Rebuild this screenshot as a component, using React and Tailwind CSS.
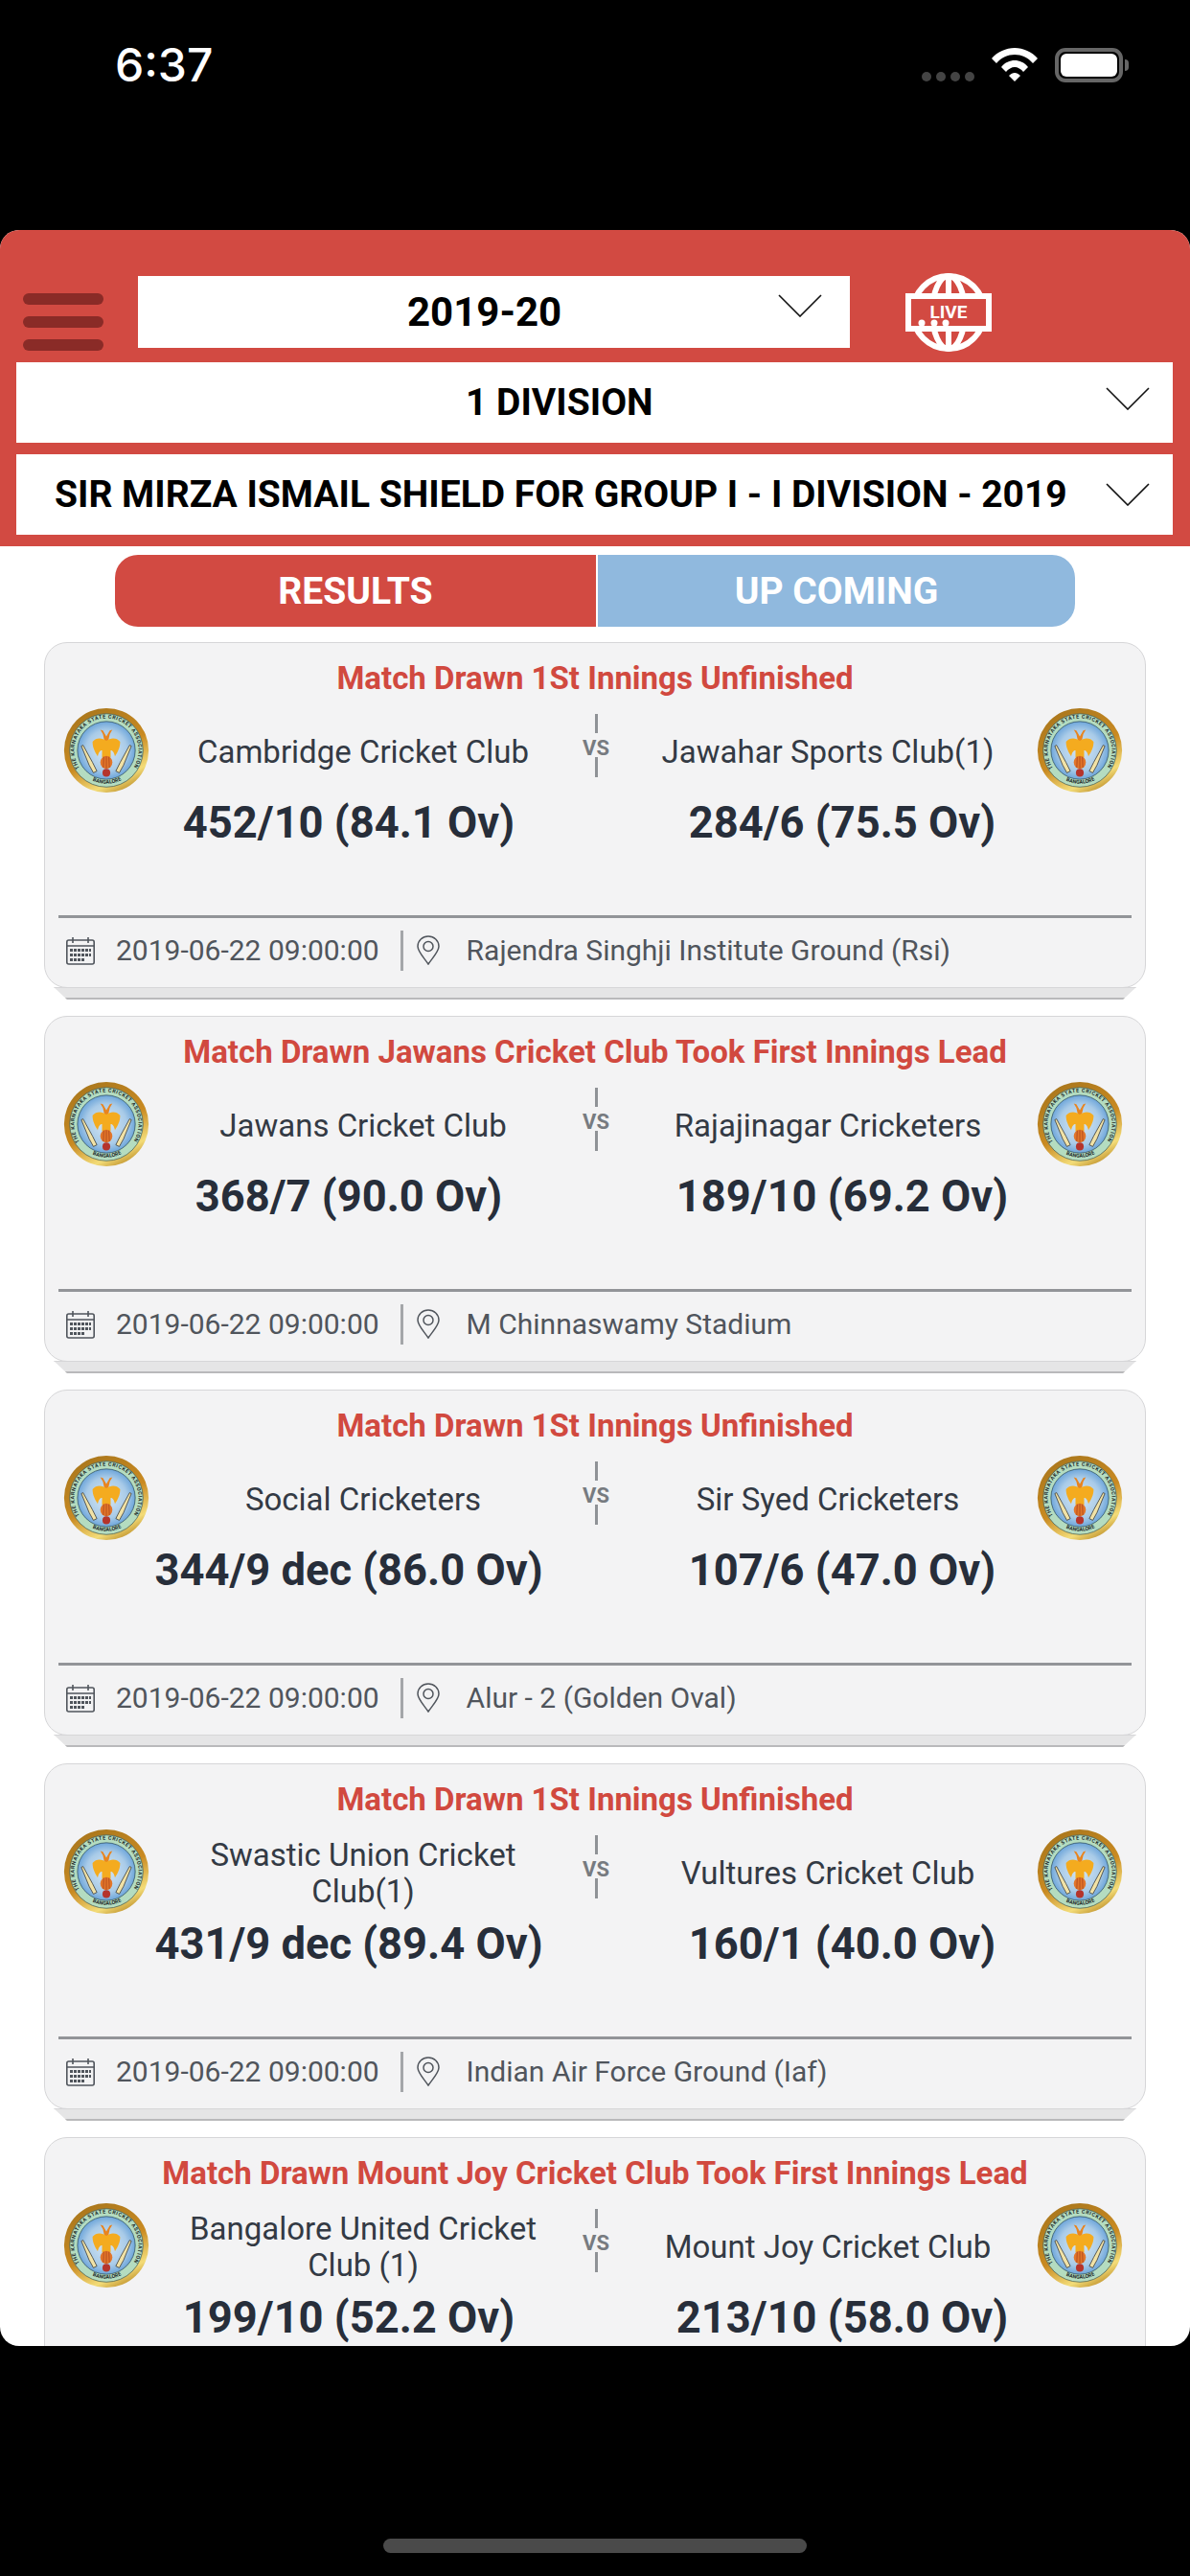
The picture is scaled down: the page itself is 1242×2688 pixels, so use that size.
import React from 'react';

const matches = [
  { status: 'Match Drawn 1St Innings Unfinished', a: 'Cambridge Cricket Club', b: 'Jawahar Sports Club(1)', sa: '452/10 (84.1 Ov)', sb: '284/6 (75.5 Ov)', venue: 'Rajendra Singhji Institute Ground (Rsi)' },
  { status: 'Match Drawn Jawans Cricket Club Took First Innings Lead', a: 'Jawans Cricket Club', b: 'Rajajinagar Cricketers', sa: '368/7 (90.0 Ov)', sb: '189/10 (69.2 Ov)', venue: 'M Chinnaswamy Stadium' },
  { status: 'Match Drawn 1St Innings Unfinished', a: 'Social Cricketers', b: 'Sir Syed Cricketers', sa: '344/9 dec (86.0 Ov)', sb: '107/6 (47.0 Ov)', venue: 'Alur - 2 (Golden Oval)' },
  { status: 'Match Drawn 1St Innings Unfinished', a: 'Swastic Union Cricket Club(1)', b: 'Vultures Cricket Club', sa: '431/9 dec (89.4 Ov)', sb: '160/1 (40.0 Ov)', venue: 'Indian Air Force Ground (Iaf)' },
  { status: 'Match Drawn Mount Joy Cricket Club Took First Innings Lead', a: 'Bangalore United Cricket Club (1)', b: 'Mount Joy Cricket Club', sa: '199/10 (52.2 Ov)', sb: '213/10 (58.0 Ov)' },
];

const Chevron = () => (
  <svg width="46" height="24" viewBox="0 0 46 24" fill="none" stroke="#111" strokeWidth="1.6">
    <path d="M1 1 L23 23 L45 1" />
  </svg>
);

const Logo = ({ id }) => (
  <svg width="90" height="90" viewBox="0 0 100 100" className="shrink-0 -mt-[4px]">
    <defs>
      <linearGradient id={`gold-${id}`} x1="0.2" y1="0" x2="0.7" y2="1">
        <stop offset="0" stopColor="#a8761c" />
        <stop offset="0.55" stopColor="#c98a22" />
        <stop offset="0.85" stopColor="#f3dc78" />
        <stop offset="1" stopColor="#c0922c" />
      </linearGradient>
      <radialGradient id={`sky-${id}`}>
        <stop offset="0" stopColor="#d6e6f3" />
        <stop offset="0.7" stopColor="#a9cbe8" />
        <stop offset="1" stopColor="#6ea6da" />
      </radialGradient>
      <path id={`top-${id}`} d="M20 72 A37.2 37.2 0 1 1 80 72" />
      <path id={`bot-${id}`} d="M27 81 A38.6 38.6 0 0 0 73 81" />
    </defs>
    <circle cx="50" cy="50" r="49" fill={`url(#gold-${id})`} />
    <circle cx="50" cy="50" r="42.5" fill="#b4dcc0" stroke="#3f5a55" strokeWidth="0.8" />
    <circle cx="50" cy="50" r="33.5" fill={`url(#sky-${id})`} stroke="#2b4a5a" strokeWidth="0.8" />
    <text fontSize="6" fontWeight="700" fill="#1d2b2b" fontFamily="Roboto, sans-serif">
      <textPath href={`#top-${id}`} startOffset="2" textLength="158">THE KARNATAKA STATE CRICKET ASSOCIATION</textPath>
    </text>
    <text fontSize="6" fontWeight="700" fill="#1d2b2b" fontFamily="Roboto, sans-serif">
      <textPath href={`#bot-${id}`} startOffset="8">BANGALORE</textPath>
    </text>
    <path d="M43 26 L46 31 L48 40 H52 L54 31 L57 26 L54 27 L50 34 L46 27 Z" fill="#e8841f" />
    <path d="M50 39 C45 35 38 35 34 40 C34 47 37 52 40 57 C41 52 43 50 45 50 L45 58 H55 L55 50 C57 50 59 52 60 57 C63 52 66 47 66 40 C62 35 55 35 50 39 Z" fill="#f4ab1f" />
    <ellipse cx="50" cy="64" rx="7" ry="7.5" fill="#e2762a" />
    <path d="M50 57 V71 M47 57.5 L46.5 70 M53 57.5 L53.5 70" stroke="#a63d1a" strokeWidth="0.8" />
    <path d="M21 45 L23 44 L34 64 L39 74 L35 76 L30 67 Z" fill="#f1e2a6" stroke="#2a2a2a" strokeWidth="0.8" />
    <path d="M79 45 L77 44 L66 64 L61 74 L65 76 L70 67 Z" fill="#f1e2a6" stroke="#2a2a2a" strokeWidth="0.8" />
    <circle cx="50" cy="76" r="4.5" fill="#b5342c" />
  </svg>
);

const LiveIcon = () => (
  <svg width="90" height="82" viewBox="0 0 90 82" className="shrink-0">
    <g fill="none" stroke="#fff" strokeWidth="6">
      <ellipse cx="45" cy="41" rx="37.5" ry="38" />
      <ellipse cx="45" cy="41" rx="17" ry="38" />
      <path d="M45 2 V80" />
    </g>
    <rect x="3" y="24" width="84" height="34" fill="#d24a42" stroke="#fff" strokeWidth="6" />
    <text x="45" y="47" textAnchor="middle" fontSize="19" fontWeight="700" fill="#fff" fontFamily="Roboto, sans-serif">LIVE</text>
    <circle cx="17" cy="52" r="3.5" fill="#fff" /><circle cx="30" cy="52" r="3.5" fill="#fff" /><circle cx="42" cy="52" r="3.5" fill="#fff" />
  </svg>
);

const CalendarIcon = () => (
  <svg width="30" height="30" viewBox="0 0 30 30" fill="none" className="shrink-0">
    <rect x="0.8" y="4" width="28.4" height="25" rx="2" stroke="#50555c" strokeWidth="1.6" fill="#f3f3f4" />
    <path d="M1 10 H29 M7 1 V7 M23 1 V7" stroke="#50555c" strokeWidth="1.6" />
    <g fill="#50555c">
      <rect x="4" y="13" width="22" height="3" /><rect x="4" y="18" width="22" height="3" /><rect x="4" y="23" width="15" height="3" />
    </g>
    <path d="M7.5 12 V27 M11.5 12 V27 M15.5 12 V27 M19.5 12 V27 M23.5 12 V27" stroke="#f3f3f4" strokeWidth="1" />
  </svg>
);

const PinIcon = () => (
  <svg width="24" height="31" viewBox="0 0 24 31" fill="none" stroke="#50555c" strokeWidth="1.5" className="shrink-0">
    <path d="M12 30 C8 24 1 17 1 11.5 C1 5.5 6 1 12 1 C18 1 23 5.5 23 11.5 C23 17 16 24 12 30 Z" />
    <circle cx="12" cy="11.5" r="5" />
  </svg>
);

const Select = ({ children, className }) => (
  <div className={`flex items-center bg-white h-[84px] ${className}`}>{children}</div>
);

const MatchCard = ({ m, i }) => (
  <div className="mb-[17px]">
    <div className="h-[361px] rounded-[24px] border border-[#d6d6d8] bg-[#f3f3f4] flex flex-col">
      <div className="h-[70px] pt-[18px] text-center text-[33px] leading-[38px] font-bold text-[#d1493f]">{m.status}</div>
      <div className="flex items-center h-[90px] -mt-[1px] pl-[19px]">
        <Logo id={`l${i}`} />
        <div className="w-[426px] shrink-0 ml-[10px] text-center text-[33px] leading-[38px] text-[#333a44]">{m.a}</div>
        <div className="flex flex-col items-center w-[60px] shrink-0 -mt-[14px]">
          <div className="w-[3px] h-[20px] bg-[#8f9296]" />
          <div className="h-[25px] mt-[3px] -mb-[3px] text-[22px] leading-[25px] font-bold text-[#777b80]">VS</div>
          <div className="w-[3px] h-[21px] bg-[#8f9296]" />
        </div>
        <div className="w-[424px] shrink-0 text-center text-[33px] leading-[38px] text-[#333a44]">{m.b}</div>
        <div className="ml-[6px] flex"><Logo id={`r${i}`} /></div>
      </div>
      <div className="flex -mt-[2px] h-[62px] items-center text-[45.3px] font-bold text-[#272e3a] whitespace-nowrap">
        <div className="w-[634px] text-center">{m.sa}</div>
        <div className="w-[396px] text-center">{m.sb}</div>
      </div>
      {m.venue && (
        <>
          <div className="mx-[14px] mt-[65px] h-[3px] bg-[#929498]" />
          <div className="flex items-center h-[67px] pl-[22px] text-[30px] text-[#50555c] whitespace-nowrap">
            <CalendarIcon />
            <span className="ml-[22px]">2019-06-22 09:00:00</span>
            <div className="w-[3px] h-[42px] bg-[#a4a6a9] ml-[22px]" />
            <div className="ml-[14px]"><PinIcon /></div>
            <span className="ml-[28px]">{m.venue}</span>
          </div>
        </>
      )}
    </div>
    <div className="mx-[10px] h-[13px] -mt-[1px] bg-[#e5e5e6] border-t border-b-2 border-t-[#d6d6d8] border-b-[#b9b9bb] [clip-path:polygon(0_0,100%_0,calc(100%-14px)_100%,14px_100%)]" />
  </div>
);

export default function App() {
  return (
    <div className="w-[1242px] h-[2688px] bg-black flex flex-col overflow-hidden font-['Roboto',sans-serif]">
      <div className="h-[240px] shrink-0 flex items-start">
        <span className="ml-[120px] mt-[39px] text-[48px] leading-[58px] font-medium text-white font-['Inter',sans-serif]">6:37</span>
        <div className="ml-auto mt-[50px] mr-[64px] flex items-end">
          <div className="flex gap-[5px] mb-[1px]">
            <span className="w-[10px] h-[10px] rounded-full bg-[#444]" />
            <span className="w-[10px] h-[10px] rounded-full bg-[#444]" />
            <span className="w-[10px] h-[10px] rounded-full bg-[#444]" />
            <span className="w-[10px] h-[10px] rounded-full bg-[#444]" />
          </div>
          <svg width="50" height="36" viewBox="0 0 50 36" className="ml-[17px]" fill="#fff">
            <path d="M25 0 C34 0 43 4 49 11 L44 16 C39 10 32 7 25 7 C18 7 11 10 6 16 L1 11 C7 4 16 0 25 0 Z" />
            <path d="M25 13 C30 13 35 15 39 20 L34 25 C32 22 28 20 25 20 C22 20 18 22 16 25 L11 20 C15 15 20 13 25 13 Z" />
            <path d="M25 26 C27 26 29 27 31 29 L25 35 L19 29 C21 27 23 26 25 26 Z" />
          </svg>
          <div className="ml-[17px] flex items-center">
            <div className="w-[71px] h-[36px] rounded-[11px] border-[4px] border-[#666] p-[2px]">
              <div className="w-full h-full rounded-[6px] bg-white" />
            </div>
            <div className="w-[4px] h-[12px] rounded-r-full bg-[#666] ml-[2px]" />
          </div>
        </div>
      </div>

      <div className="h-[2208px] shrink-0 bg-white rounded-[20px] overflow-hidden">
        <div className="bg-[#d24a42] pt-[48px] pb-[12px]">
          <div className="flex items-center h-[75px]">
            <div className="ml-[24px] w-[84px] flex flex-col gap-[12px] mt-[20px]">
              <div className="h-[12px] rounded-full bg-[#8a2b27]" />
              <div className="h-[12px] rounded-full bg-[#8a2b27]" />
              <div className="h-[12px] rounded-full bg-[#8a2b27]" />
            </div>
            <Select className="ml-[36px] w-[743px] !h-[75px] pl-[281px] pr-[29px] justify-between">
              <span className="text-[42px] font-bold text-black">2019-20</span>
              <div className="-mt-[14px]"><Chevron /></div>
            </Select>
            <div className="ml-[58px]"><LiveIcon /></div>
          </div>
          <Select className="ml-[17px] mr-[18px] mt-[15px] justify-between pr-[24px]">
            <span className="ml-[469px] text-[39px] font-bold text-black">1 DIVISION</span>
            <div className="-mt-[8px]"><Chevron /></div>
          </Select>
          <Select className="ml-[17px] mr-[18px] mt-[12px] justify-between pr-[24px]">
            <span className="ml-[40px] text-[39px] font-bold text-black whitespace-nowrap">SIR MIRZA ISMAIL SHIELD FOR GROUP I - I DIVISION - 2019</span>
            <Chevron />
          </Select>
        </div>

        <div className="flex ml-[120px] mt-[9px] h-[75px] text-[39px] font-bold text-white">
          <div className="w-[502px] pt-[1px] rounded-l-[24px] bg-[#d24a42] flex items-center justify-center">RESULTS</div>
          <div className="w-[498px] pt-[1px] ml-[2px] rounded-r-[24px] bg-[#90b9de] flex items-center justify-center">UP COMING</div>
        </div>

        <div className="mx-[46px] mt-[16px]">
          {matches.map((m, i) => <MatchCard key={i} m={m} i={i} />)}
        </div>
      </div>

      <div className="flex-1 flex justify-center">
        <div className="w-[442px] h-[15px] mt-[201px] rounded-full bg-[#4a4a4a]" />
      </div>
    </div>
  );
}
